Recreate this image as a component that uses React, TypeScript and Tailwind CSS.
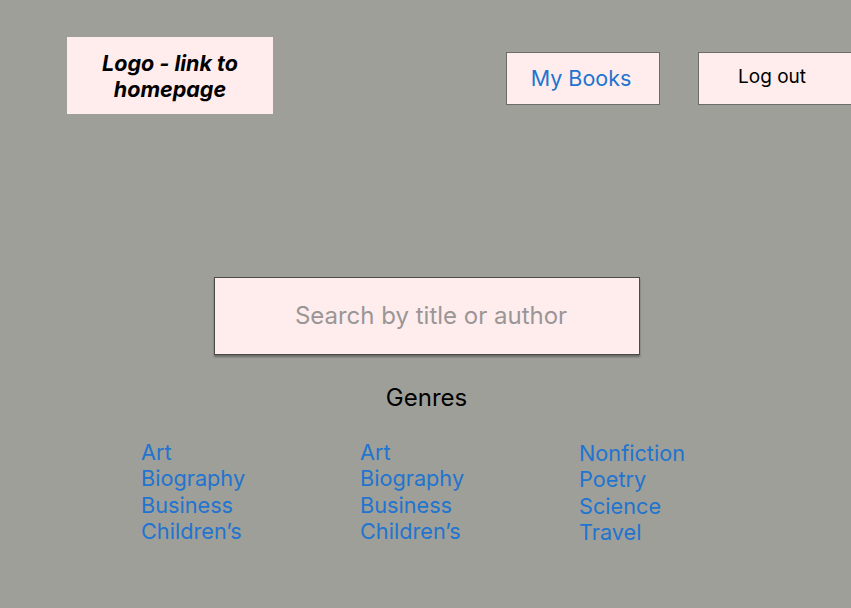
import React from 'react';

const genreColumns: string[][] = [
  ['Art', 'Biography', 'Business', 'Children’s'],
  ['Art', 'Biography', 'Business', 'Children’s'],
  ['Nonfiction', 'Poetry', 'Science', 'Travel'],
];

const App: React.FC = () => {
  return (
    <div
      className="w-[851px] h-[608px] overflow-hidden bg-[#9f9f99] text-black"
      style={{ fontFamily: 'Inter, "Noto Sans", sans-serif' }}
    >
      {/* Header */}
      <header className="flex items-start pt-[37px] pl-[67px]">
        <a
          href="#"
          className="shrink-0 w-[206px] h-[77px] bg-[#ffeded] flex items-center justify-center text-center text-[21.5px] leading-[26px] font-bold italic"
        >
          Logo - link to
          <br />
          homepage
        </a>
        <nav className="shrink-0 flex gap-[38px] mt-[15px] ml-[233px]">
          <a
            href="#"
            className="shrink-0 w-[154px] h-[53px] bg-[#ffeded] border border-[#6b6b6b] flex items-center justify-center pr-[4px] pb-[1px] text-[21.5px] text-[#2174cf]"
          >
            My Books
          </a>
          <button className="shrink-0 w-[160px] h-[53px] bg-[#ffeded] border border-[#6b6b6b] flex items-center justify-start pl-[39px] text-[19px] pb-[3px]">
            Log out
          </button>
        </nav>
      </header>

      {/* Search */}
      <div className="mt-[163px] ml-[214px]">
        <input
          type="text"
          placeholder="Search by title or author"
          className="w-[426px] h-[78px] bg-[#ffeded] border border-[#4a4a4a] shadow-[0_2px_2px_rgba(0,0,0,0.35)] text-center pl-[8px] pb-[2px] text-[24px] placeholder:text-[#9a9696] outline-none"
        />
      </div>

      {/* Genres */}
      <h2 className="mt-[28px] text-center pl-[2px] text-[24px] leading-[30px] font-normal">Genres</h2>

      <div className="mt-[26px] ml-[141px] grid grid-cols-[219px_219px_219px]">
        {genreColumns.map((col, i) => (
          <ul key={i} className={i === 2 ? 'pt-[1px]' : ''}>
            {col.map((g) => (
              <li key={g} className="text-[21.7px] leading-[26.3px] text-[#2174cf]">
                <a href="#">{g}</a>
              </li>
            ))}
          </ul>
        ))}
      </div>
    </div>
  );
};

export default App;
